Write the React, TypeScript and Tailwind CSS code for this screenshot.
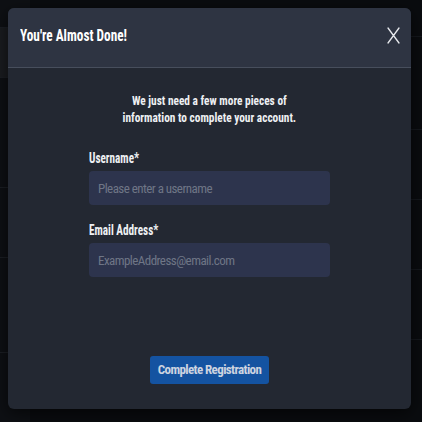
const FONT = "font-['Liberation_Sans_Narrow','Roboto_Condensed',Roboto,sans-serif]";

function Field({ label, placeholder }: { label: string; placeholder: string }) {
  return (
    <div className="flex flex-col gap-[5px]">
      <label className="text-[14px] font-bold leading-[16px] text-[#eef0f3]">
        <span className="inline-block origin-left scale-x-[0.8]">{label}</span>
      </label>
      <input
        type="text"
        placeholder={placeholder}
        className="h-[34px] w-[241px] rounded-[4px] border-0 bg-[#2d344d] px-[9px] text-[13px] tracking-[-0.55px] text-white placeholder:text-[#6f7686] focus:outline-none"
      />
    </div>
  );
}

export default function App() {
  return (
    <div className={`relative h-[422px] w-[422px] overflow-hidden bg-[#0a0c0f] ${FONT}`}>
      {/* page behind the overlay */}
      <div className="flex h-full">
        <div className="flex w-[30px] flex-col bg-[#0e1014]">
          <div className="h-[28px] border-b border-[#1b1e24]" />
          <div className="h-[50px] border-b border-[#1b1e24] bg-[#1a1c20]" />
          <div className="h-[110px] border-b border-[#1b1e24]" />
          <div className="h-[70px] border-b border-[#1b1e24]" />
          <div className="h-[95px] border-b border-[#1b1e24]" />
        </div>
        <div className="flex-1" />
        <div className="flex w-[20px] flex-col">
          <div className="h-[37px] border-b border-[#15181d]" />
          <div className="h-[93px] border-b border-[#15181d]" />
          <div className="h-[70px] border-b border-[#15181d]" />
          <div className="h-[70px] border-b border-[#15181d]" />
          <div className="h-[70px] border-b border-[#15181d]" />
        </div>
      </div>

      {/* modal */}
      <div className="absolute left-[8px] top-[8px] flex h-[401px] w-[403px] flex-col overflow-hidden rounded-[6px] bg-[#232832] shadow-[0_4px_16px_rgba(0,0,0,0.6)]">
        <div className="flex h-[60px] items-center justify-between border-b border-[#474e5c] bg-[#2e3442] pb-[4px] pl-[12px] pr-[11px]">
          <h2 className="text-[17px] font-bold text-white">
            <span className="inline-block origin-left scale-x-[0.78]">You're Almost Done!</span>
          </h2>
          <svg width="13" height="17" viewBox="0 0 13 17" fill="none" stroke="#e6e8ec" strokeWidth="1.3" strokeLinecap="round">
            <path d="M1 1 L12 16 M12 1 L1 16" />
          </svg>
        </div>
        <div className="flex flex-1 flex-col items-center pt-[24px]">
          <p className="inline-block origin-center scale-x-[0.84] text-center text-[13.5px] font-bold leading-[17px] text-[#eef0f3]">
            We just need a few more pieces of
            <br />
            information to complete your account.
          </p>
          <div className="mt-[24px] flex flex-col gap-[17px] self-start pl-[81px]">
            <Field label="Username*" placeholder="Please enter a username" />
            <Field label="Email Address*" placeholder="ExampleAddress@email.com" />
          </div>
          <button
            type="button"
            className="mt-[79px] h-[28px] w-[119px] rounded-[3px] bg-[#1453a1] text-[13px] font-bold tracking-[-0.6px] text-[#cdd4e0]"
          >
            Complete Registration
          </button>
        </div>
      </div>
    </div>
  );
}
